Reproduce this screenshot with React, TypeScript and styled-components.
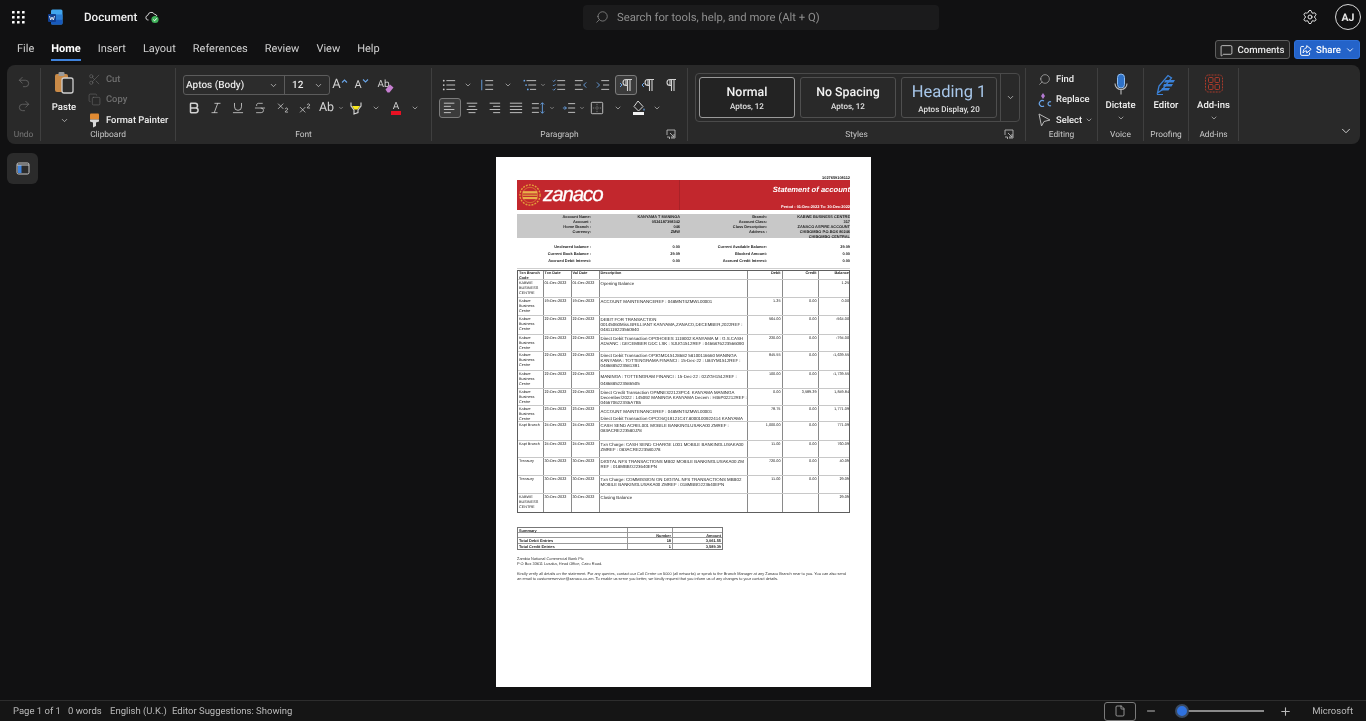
import { FC, ReactNode } from "react";
import styled, { createGlobalStyle } from "styled-components";
import {
  Bold, ChevronDown, Copy, File, Italic, MessageSquare, Minus, Plus, Redo2, Scissors, Search,
  Settings, Strikethrough, Subscript, Superscript, Underline, Undo2,
} from "lucide-react";

const GlobalStyle = createGlobalStyle`
  html, body { margin: 0; padding: 0; background: #111112; }
  #root { height: 721px; overflow: hidden; }
  * { box-sizing: border-box; }
`;

const Shell = styled.div`
  display: flex;
  flex-direction: column;
  width: 1366px;
  height: 721px;
  background: #111112;
  color: #e8e8e8;
  font-family: Roboto, "Noto Sans", sans-serif;
  text-rendering: geometricPrecision;
  filter: blur(0.25px);
`;

/* ---- title bar ---- */
const TitleBar = styled.div`
  display: flex;
  align-items: center;
  height: 33px;
  padding: 1px 5px 0 12px;
`;
const TitleLeft = styled.div`
  display: flex;
  align-items: center;
  width: 571px;
`;
const AppName = styled.span`
  margin-left: 21px;
  font-size: 11.6px;
  font-weight: 500;
  color: #f0f0f0;
`;
const SearchBox = styled.div`
  display: flex;
  align-items: center;
  gap: 8px;
  width: 356px;
  height: 25px;
  padding-left: 12px;
  border-radius: 4px;
  background: #1b1b1c;
  color: #8f8f8f;
  font-size: 11.3px;
`;
const TitleRight = styled.div`
  display: flex;
  align-items: center;
  gap: 17px;
  margin-left: auto;
`;
const Avatar = styled.div`
  display: flex;
  align-items: center;
  justify-content: center;
  width: 26px;
  height: 26px;
  border: 1px solid #d8d8d8;
  border-radius: 50%;
  font-size: 10.5px;
  font-weight: 700;
`;

/* ---- menu row ---- */
const MenuBar = styled.div`
  display: flex;
  align-items: flex-start;
  gap: 17px;
  height: 32px;
  padding: 7px 6px 0 17px;
`;
const MenuTab = styled.div<{ $active?: boolean }>`
  height: 21px;
  font-size: 11px;
  line-height: 18px;
  font-weight: ${(p) => (p.$active ? 700 : 400)};
  color: ${(p) => (p.$active ? "#ffffff" : "#d0d0d0")};
  border-bottom: 2px solid ${(p) => (p.$active ? "#3f83dd" : "transparent")};
`;
const MenuActions = styled.div`
  display: flex;
  gap: 4px;
  margin-left: auto;
`;
const CommentsButton = styled.div`
  display: flex;
  align-items: center;
  justify-content: center;
  gap: 4px;
  width: 75px;
  height: 19px;
  padding-top: 1px;
  border: 1px solid #5e5e5e;
  border-radius: 3px;
  background: #232323;
  font-size: 9.6px;
  font-weight: 500;
`;
const ShareButton = styled(CommentsButton)`
  width: 66px;
  background: #2463c9;
  border-color: #2e70d8;
  color: #fff;
`;

/* ---- ribbon ---- */
const Ribbon = styled.div`
  display: flex;
  height: 79px;
  margin: 0 6px 0 7px;
  border-radius: 8px;
  background: #292929;
`;
const Group = styled.div<{ $w: number; $plain?: boolean }>`
  display: flex;
  flex-direction: column;
  flex: none;
  width: ${(p) => p.$w}px;
  margin: 3px 0 3px;
  border-right: ${(p) => (p.$plain ? "none" : "1px solid #3f3f3f")};
`;
const GroupBody = styled.div`
  display: flex;
  flex: 1;
  min-height: 0;
`;
const GroupFoot = styled.div<{ $dim?: boolean }>`
  position: relative;
  flex: none;
  height: 20px;
  text-align: center;
  font-size: 8.4px;
  line-height: 28px;
  color: ${(p) => (p.$dim ? "#777" : "#c8c8c8")};
`;
const Launcher = styled.span<{ $right: number }>`
  position: absolute;
  right: ${(p) => p.$right}px;
  top: 8px;
  display: flex;
`;
const Stack = styled.div<{ $pad?: string; $gap?: number; $start?: boolean; $w?: string; $ml?: number }>`
  display: flex;
  flex: none;
  flex-direction: column;
  align-items: ${(p) => (p.$start ? "flex-start" : "center")};
  width: ${(p) => p.$w ?? "auto"};
  margin-left: ${(p) => p.$ml ?? 0}px;
  padding: ${(p) => p.$pad ?? "0"};
  gap: ${(p) => p.$gap ?? 0}px;
  & > * { flex: none; }
`;
const BigLabel = styled.div<{ $mt: number }>`
  margin-top: ${(p) => p.$mt}px;
  font-size: 9.5px;
  font-weight: 500;
  line-height: 14px;
  color: #f0f0f0;
`;
const CaretSlot = styled.span`
  display: flex;
  margin-top: 1px;
`;
const SmallRow = styled.div<{ $dim?: boolean }>`
  display: flex;
  align-items: center;
  height: 20.5px;
  gap: 3px;
  font-size: 9.4px;
  font-weight: 500;
  white-space: nowrap;
  color: ${(p) => (p.$dim ? "#6f6f6f" : "#eeeeee")};
`;
const SlimIcon = styled.span`
  display: flex;
  justify-content: center;
  flex: none;
  width: 16px;
  margin-right: 1px;
`;
const FontBox = styled.div`
  display: flex;
  align-items: center;
  width: 147px;
  height: 20px;
  border: 1px solid #5c5c5c;
  border-radius: 3px;
  background: #2c2c2c;
  font-size: 10px;
  font-weight: 500;
`;
const FontName = styled.div`
  display: flex;
  align-items: center;
  justify-content: space-between;
  width: 101px;
  height: 100%;
  padding: 0 6px 0 2px;
  border-right: 1px solid #5c5c5c;
`;
const FontSize = styled.div`
  display: flex;
  flex: 1;
  align-items: center;
  justify-content: space-between;
  padding: 0 6px 0 7px;
`;
const ToolRow = styled.div<{ $ml?: number; $mt?: number }>`
  display: flex;
  align-items: center;
  height: 22px;
  margin-left: ${(p) => p.$ml ?? 0}px;
  margin-top: ${(p) => p.$mt ?? 0}px;
`;
const Tool = styled.div<{ $w: number; $ml?: number; $boxed?: boolean }>`
  display: flex;
  align-items: center;
  justify-content: center;
  flex: none;
  width: ${(p) => p.$w}px;
  height: ${(p) => (p.$boxed ? 20 : 22)}px;
  margin-left: ${(p) => p.$ml ?? 0}px;
  color: #d2d2d2;
  border-radius: 3px;
  ${(p) => p.$boxed && "border: 1px solid #7c7c7c; background: #3b3b3b;"}
`;
const ToolLetter = styled.span<{ $size: number }>`
  font-size: ${(p) => p.$size}px;
  line-height: 16px;
`;
const StylePanel = styled.div`
  display: flex;
  align-items: stretch;
  flex: none;
  width: 325px;
  height: 49px;
  margin: 5px 0 0 7px;
  padding-left: 3px;
  border: 1px solid #4a4a4a;
  border-radius: 4px;
`;
const StyleCard = styled.div<{ $current?: boolean; $last?: boolean }>`
  display: flex;
  flex-direction: column;
  align-items: center;
  justify-content: center;
  width: 96px;
  height: 41px;
  margin: 3px ${(p) => (p.$last ? 3 : 5)}px 0 0;
  padding-top: 2px;
  border: 1px solid ${(p) => (p.$current ? "#9a9a9a" : "#4f4f4f")};
  border-radius: 3px;
  background: ${(p) => (p.$current ? "#232323" : "#292929")};
`;
const StyleTitle = styled.div<{ $heading?: boolean }>`
  font-size: ${(p) => (p.$heading ? 16.5 : 12.4)}px;
  line-height: ${(p) => (p.$heading ? 22 : 17)}px;
  font-weight: ${(p) => (p.$heading ? 400 : 500)};
  color: ${(p) => (p.$heading ? "#a8c7ea" : "#f2f2f2")};
`;
const StyleSub = styled.div`
  font-size: 8px;
  line-height: 12px;
  font-weight: 500;
  color: #e0e0e0;
`;
const StyleMore = styled.div`
  display: flex;
  align-items: center;
  justify-content: center;
  flex: 1;
  border-left: 1px solid #4a4a4a;
  color: #d0d0d0;
`;
const CollapseSlot = styled.div`
  display: flex;
  align-items: flex-end;
  justify-content: flex-end;
  flex: 1;
  padding: 0 7px 6px 0;
  color: #d8d8d8;
`;

/* ---- canvas and page ---- */
const Canvas = styled.div`
  display: grid;
  grid-template-columns: 496px 375px 1fr;
  flex: 1;
  min-height: 0;
  padding-top: 9px;
`;
const PaneButton = styled.div`
  display: flex;
  align-items: center;
  justify-content: center;
  width: 31px;
  height: 31px;
  margin-left: 7px;
  border-radius: 6px;
  background: #2b2b2b;
`;
const Page = styled.div`
  height: 530px;
  margin-top: 4px;
  padding: 19px 21px 0;
  background: #fff;
  color: #222;
  font-family: "Liberation Sans", Arial, sans-serif;
  overflow: hidden;
  filter: blur(0.3px);
`;
const RefNumber = styled.div`
  height: 4px;
  text-align: right;
  font-size: 3.9px;
  line-height: 4px;
  font-weight: 700;
`;
const Banner = styled.div`
  display: grid;
  grid-template-columns: 163px 1fr;
  height: 29.5px;
  background: #c2272d;
  color: #fff;
  overflow: hidden;
`;
const BannerLeft = styled.div`
  display: flex;
  align-items: center;
  gap: 1px;
  padding-left: 1px;
  border-right: 1px solid #a92228;
`;
const BrandName = styled.span`
  font-size: 20.5px;
  line-height: 22px;
  font-style: italic;
  letter-spacing: -1.1px;
  -webkit-text-stroke: 0.3px #fff;
`;
const BannerRight = styled.div`
  display: flex;
  flex-direction: column;
  align-items: flex-end;
  padding-top: 5px;
  white-space: nowrap;
`;
const StatementTitle = styled.div`
  font-size: 7.6px;
  line-height: 9px;
  font-weight: 700;
  font-style: italic;
`;
const PeriodText = styled.div`
  margin-top: 10px;
  font-size: 3.9px;
  line-height: 5px;
  font-weight: 700;
`;
const InfoGrid = styled.div<{ $grey?: boolean; $row: number }>`
  display: grid;
  grid-template-columns: 74px 89px 87px 83px;
  grid-auto-rows: ${(p) => p.$row}px;
  margin-top: ${(p) => (p.$grey ? 4.5 : 6)}px;
  height: ${(p) => (p.$grey ? "24px" : "auto")};
  background: ${(p) => (p.$grey ? "#c8c8c8" : "transparent")};
  font-size: 3.9px;
  font-weight: 700;
  text-align: right;
  line-height: 5px;
`;
const InfoCell = styled.div`
  white-space: pre-line;
`;
const Rule = styled.div`
  height: 1px;
  margin-top: 3px;
  background: #cfcfcf;
`;
const StatementTable = styled.div`
  width: 333px;
  margin-top: 1px;
  border: 1px solid #5e5e5e;
`;
const Row = styled.div<{ $h: number }>`
  display: grid;
  grid-template-columns: 25.5px 28px 28px 148px 35px 36px 31.5px;
  height: ${(p) => p.$h}px;
  border-bottom: 1px solid #c8c8c8;
  &:last-child { border-bottom: none; }
`;
const Cell = styled.div<{ $num?: boolean; $desc?: boolean; $loose?: boolean; $head?: boolean }>`
  padding: ${(p) => (p.$loose ? "1.5px" : p.$head ? "0" : "0.5px")} 1px 0 1px;
  border-right: 1px solid #8a8a8a;
  overflow: hidden;
  white-space: pre;
  text-align: ${(p) => (p.$num ? "right" : "left")};
  font-weight: ${(p) => (p.$head ? 700 : 400)};
  font-size: ${(p) => (p.$desc ? 4.4 : 3.8)}px;
  line-height: ${(p) => (p.$loose ? 7 : 5)}px;
  &:last-child { border-right: none; }
`;
const SummaryTable = styled.div`
  width: 206px;
  margin-top: 14px;
  border: 1px solid #777;
  font-size: 3.9px;
  line-height: 5px;
`;
const SumRow = styled.div`
  display: grid;
  grid-template-columns: 110px 45px 49px;
  height: 5.2px;
  border-bottom: 0.6px solid #999;
  &:last-child { border-bottom: none; }
`;
const SumCell = styled.div<{ $num?: boolean; $bold?: boolean }>`
  padding: 0 1px;
  border-right: 0.6px solid #999;
  text-align: ${(p) => (p.$num ? "right" : "left")};
  font-weight: ${(p) => (p.$bold ? 700 : 400)};
  &:last-child { border-right: none; }
`;
const Notes = styled.div`
  margin-top: 6.5px;
  font-size: 3.9px;
  line-height: 5px;
  color: #333;
`;
const NoteBlock = styled.p`
  margin: 0 0 4.7px;
`;

/* ---- status bar ---- */
const StatusBar = styled.div`
  display: flex;
  align-items: center;
  height: 21px;
  padding: 0 13px;
  border-top: 1px solid #2d2d2d;
  background: #151515;
  font-size: 9.5px;
  color: #b9b9b9;
`;
const StatusItem = styled.span<{ $w: number }>`
  flex: none;
  width: ${(p) => p.$w}px;
  white-space: nowrap;
`;
const ViewButton = styled.div`
  display: flex;
  align-items: center;
  justify-content: center;
  width: 32px;
  height: 19px;
  margin-left: auto;
  border: 1px solid #7a7a7a;
  border-radius: 3px;
`;
const ZoomTrack = styled.div`
  position: relative;
  width: 88px;
  height: 2px;
  margin: 0 15px 0 19px;
  background: #8a8a8a;
`;
const ZoomThumb = styled.span`
  position: absolute;
  left: -1px;
  top: -6px;
  width: 14px;
  height: 14px;
  border: 2px solid #3a4a60;
  border-radius: 50%;
  background: #2f72e0;
`;
const BrandText = styled.span`
  margin-left: 20px;
`;

/* ---- drawn icons ---- */
const G: FC<{ s?: number; children: ReactNode }> = ({ s = 16, children }) => (
  <svg width={s} height={s} viewBox="0 0 16 16" fill="none" stroke="currentColor" strokeWidth="1">
    {children}
  </svg>
);
const Caret: FC<{ size?: number }> = ({ size = 9 }) => <ChevronDown size={size} strokeWidth={2} color="#c8c8c8" />;

const Waffle = () => (
  <svg width="13" height="13" viewBox="0 0 13 13" fill="#fff">
    {[0, 5, 10].flatMap((y) => [0, 5, 10].map((x) => <rect key={`${x}${y}`} x={x} y={y} width="2.6" height="2.6" rx=".5" />))}
  </svg>
);
const WordIcon = () => (
  <svg width="15" height="17" viewBox="0 0 15 17">
    <rect x="3" y="0.5" width="11.5" height="15" rx="1.5" fill="#41a5ee" />
    <rect x="3" y="5.5" width="11.5" height="5" fill="#2b7cd3" />
    <rect x="3" y="10.5" width="11.5" height="5" rx="1" fill="#185abd" />
    <rect x="0" y="5" width="8" height="8" rx="1" fill="#103f91" />
    <path d="M1.5 7 L2.7 11 L4 8 L5.3 11 L6.5 7" fill="none" stroke="#fff" strokeWidth=".8" />
  </svg>
);
const CloudOk = () => (
  <svg width="15" height="14" viewBox="0 0 15 14" style={{ marginLeft: 8 }}>
    <path d="M3.5 10 H2.8 A2.4 2.4 0 0 1 2.8 5.3 A3.6 3.6 0 0 1 9.6 4.4 A2.5 2.5 0 0 1 12 6" fill="none" stroke="#d8d8d8" />
    <circle cx="10" cy="9.5" r="3.6" fill="#3fb25a" />
    <path d="M8.3 9.6 L9.6 10.8 L11.8 8.3" fill="none" stroke="#fff" />
  </svg>
);
const ShareIcon = () => (
  <svg width="13" height="13" viewBox="0 0 16 16" fill="none" stroke="#fff" strokeWidth="1.2">
    <path d="M6 3 H3.5 A1.5 1.5 0 0 0 2 4.5 V12.5 A1.5 1.5 0 0 0 3.5 14 H11.5 A1.5 1.5 0 0 0 13 12.5 V10.5" />
    <path d="M9.5 2 L15 6.5 L9.5 11 V8.5 C7 8.5 6 9.5 5 11 C5 8 6.5 4.8 9.5 4.6 Z" />
  </svg>
);
const PasteIcon = () => (
  <svg width="21" height="24" viewBox="0 0 21 24">
    <rect x="1" y="3" width="13" height="18" rx="2" fill="#c98a47" />
    <rect x="4.5" y="1" width="6" height="4" rx="1" fill="#9a9a9a" />
    <rect x="8" y="7" width="11" height="15" rx="2" fill="#2c2c2c" stroke="#cfcfcf" strokeWidth="1.3" />
  </svg>
);
const BrushIcon = () => (
  <svg width="13" height="15" viewBox="0 0 13 15">
    <rect x="2" y="0.5" width="9" height="6" rx="1" fill="#e08a32" />
    <path d="M2 6.5 H11 V8.5 L8 9.5 V13 L5 14.5 V9.5 L2 8.5 Z" fill="#d9d9d9" />
  </svg>
);
const Tick: FC<{ up?: boolean }> = ({ up }) => (
  <svg width="7" height="6" viewBox="0 0 7 6" fill="none" style={{ alignSelf: "flex-start", marginTop: 4 }}>
    <path d={up ? "M1 4.5 L3.5 2 L6 4.5" : "M1 1.5 L3.5 4 L6 1.5"} stroke="#6aa5e8" strokeWidth="1.1" />
  </svg>
);
const EraserMark = () => (
  <svg width="9" height="9" viewBox="0 0 9 9" style={{ marginLeft: -5, marginTop: 6 }}>
    <path d="M0.5 5.5 L5 0.5 L8.5 3.5 L4.5 8.5 H2.5 Z" fill="#c77fd1" />
  </svg>
);
const Highlight = () => (
  <svg width="14" height="15" viewBox="0 0 14 15" fill="none">
    <path d="M2 1.5 V5 L5 9 V13 L9 11.5 V9 L12 5 V1.5" stroke="#d8d8d8" strokeWidth="1.1" />
    <path d="M3 5 H11 L8.5 8.5 H5.5 Z" fill="#f8e71c" />
  </svg>
);
const ColorBar = styled.span`
  display: block;
  width: 10px;
  height: 3.5px;
  margin-top: -1px;
  background: #e81123;
`;
const ColorLetter = styled.span`
  display: flex;
  flex-direction: column;
  align-items: center;
  font-size: 10px;
  line-height: 11px;
`;
const Bullets = () => (
  <G s={14}>
    <path d="M5 3 H15 M5 8 H15 M5 13 H15" />
    {[3, 8, 13].map((y) => <circle key={y} cx="2" cy={y} r="1" fill="#cfcfcf" stroke="none" />)}
  </G>
);
const Numbered = () => (
  <G s={14}>
    <path d="M2 2 V14" stroke="#6aa5e8" />
    <path d="M6 3 H15 M6 8 H15 M6 13 H15" />
  </G>
);
const Multi = () => (
  <G s={14}>
    <path d="M4 3 H15 M6 8 H15 M8 13 H15" />
    <circle cx="1.5" cy="3" r="1" fill="#6aa5e8" stroke="none" />
    <circle cx="3.5" cy="8" r="1" fill="#6aa5e8" stroke="none" />
    <circle cx="5.5" cy="13" r="1" fill="#6aa5e8" stroke="none" />
  </G>
);
const Checklist = () => (
  <G s={14}>
    <path d="M6 3 H15 M6 8 H15 M6 13 H15" />
    <path d="M1 3 L2 4 L4 2 M1 8 L2 9 L4 7 M1 13 L2 14 L4 12" stroke="#6aa5e8" />
  </G>
);
const Outdent = () => (
  <G s={14}>
    <path d="M1 3 H10 M1 8 H8 M1 13 H10" />
    <path d="M14 5 L11 8 L14 11" stroke="#6aa5e8" />
  </G>
);
const Indent = () => (
  <G s={14}>
    <path d="M6 3 H15 M8 8 H15 M6 13 H15" />
    <path d="M1 5 L4 8 L1 11" stroke="#6aa5e8" />
  </G>
);
const Pilcrow: FC<{ mark?: "ltr" | "rtl" }> = ({ mark }) => (
  <svg width="15" height="14" viewBox="0 0 15 14" fill="none">
    {mark === "ltr" && <path d="M1 5 L3 7 L1 9" stroke="#6aa5e8" />}
    {mark === "rtl" && <path d="M3 5 L1 7 L3 9" stroke="#6aa5e8" />}
    <path d="M7 7.5 A3 3 0 0 1 7 1.5 H13 M8.5 1.5 V13 M11 1.5 V13 M7 1.5 V7.5 H8.5" stroke="#d2d2d2" strokeWidth="1.1" fill="none" />
  </svg>
);
const Align: FC<{ kind: "left" | "center" | "right" | "justify" }> = ({ kind }) => {
  const s = (w: number) => (kind === "left" || kind === "justify" ? 1 : kind === "center" ? 8 - w / 2 : 15 - w);
  const ws = kind === "justify" ? [14, 14, 14, 14] : [12, 8, 12, 8];
  return (
    <G s={14}>
      {ws.map((w, i) => <path key={i} d={`M${s(w)} ${2.5 + i * 3.6} h${w}`} />)}
    </G>
  );
};
const LineSpacing = () => (
  <G s={14}>
    <path d="M1 3 H9 M1 8 H9 M1 13 H9" />
    <path d="M13 2 V14 M11 4 L13 2 L15 4 M11 12 L13 14 L15 12" stroke="#6aa5e8" />
  </G>
);
const IndentMark = () => (
  <G s={14}>
    <path d="M7 3 H15 M7 8 H15 M7 13 H15" />
    <path d="M1 8 H5 M3 6 L5 8 L3 10" stroke="#6aa5e8" />
  </G>
);
const Borders = () => (
  <G s={14}>
    <rect x="1.5" y="1.5" width="13" height="13" rx="1" stroke="#cfcfcf" />
    <path d="M8 1.5 V14.5 M1.5 8 H14.5" stroke="#8a8a8a" strokeDasharray="1 1" />
  </G>
);
const Shading = () => (
  <svg width="15" height="16" viewBox="0 0 15 16" fill="none">
    <path d="M7 1 L12 6.5 L7.5 11 L3 6.5 Z" stroke="#d8d8d8" />
    <path d="M13 8 Q14.5 10 13 11 Q11.5 10 13 8" fill="#6aa5e8" />
    <rect x="2" y="12" width="11" height="3" fill="#f2f2f2" />
  </svg>
);
const LauncherIcon = () => (
  <svg width="10" height="10" viewBox="0 0 10 10" fill="none" stroke="#b8b8b8" strokeWidth=".9">
    <path d="M1 6 V1 H9 V9 H5" />
    <path d="M1 8 H3.5 V10 M4 4 L8 8 M8 5 V8 H5" />
  </svg>
);
const ReplaceIcon = () => (
  <svg width="15" height="15" viewBox="0 0 15 15" fill="none">
    <path d="M6 1 L8 4 L6 7 L4 4 Z" fill="#b37ad1" />
    <path d="M7 9 A3 3 0 1 0 7 14" stroke="#6aa5e8" strokeWidth="1.2" />
    <path d="M14 10 A2 2 0 1 0 14 13.5" stroke="#6aa5e8" strokeWidth="1.2" />
  </svg>
);
const SelectIcon = () => (
  <svg width="14" height="14" viewBox="0 0 14 14" fill="none" stroke="#b8b8b8">
    <path d="M2 1 L13 7 L7 8.5 L4.5 13 Z" />
  </svg>
);
const MicIcon = () => (
  <svg width="16" height="23" viewBox="0 0 16 23" fill="none">
    <rect x="4.5" y="1" width="7" height="14" rx="3.5" fill="#2f72c8" stroke="#8fbdf0" />
    <path d="M2 10.5 A6 6 0 0 0 14 10.5 M8 17 V21.5" stroke="#bdbdbd" strokeWidth="1.1" />
  </svg>
);
const EditorIcon = () => (
  <svg width="20" height="23" viewBox="0 0 20 23" fill="none">
    <path d="M1.5 20 L3 13 L12 2.5 L15.5 5 L6.5 16.5 Z" stroke="#3b82d8" strokeWidth="1.3" />
    <path d="M8 11 H17 L15.5 13.5 H7 Z M9.5 7 H19 L17.5 9.5 H8 Z M6 15 H14 L12.5 17.5 H5 Z" fill="#3b82d8" />
    <path d="M1 21.5 H7" stroke="#3b82d8" />
  </svg>
);
const AddinsIcon = () => (
  <svg width="18" height="19" viewBox="0 0 18 19" fill="none" stroke="#a83a2b" strokeWidth="1">
    <rect x="0.5" y="1" width="17" height="17" rx="3" strokeDasharray="2 1" />
    <rect x="3.5" y="3.5" width="4.5" height="5" rx="1" />
    <rect x="10" y="3.5" width="4.5" height="5" rx="1" />
    <rect x="3.5" y="10.5" width="4.5" height="5" rx="1" />
    <rect x="10" y="10.5" width="4.5" height="5" rx="1" />
  </svg>
);
const PaneIcon = () => (
  <svg width="14" height="13" viewBox="0 0 14 13">
    <rect x="1" y="1" width="12" height="11" rx="1.5" fill="none" stroke="#c9c9c9" />
    <rect x="2" y="3" width="3.5" height="8" fill="#3f83dd" />
    <path d="M1 3 H13" stroke="#c9c9c9" />
  </svg>
);
const ZanacoGear = () => (
  <svg width="24" height="24" viewBox="0 0 25 25">
    <circle cx="12.5" cy="12.5" r="10.5" fill="#c2272d" stroke="#e5a13a" strokeWidth="1.4" strokeDasharray="2 1.2" />
    <circle cx="12.5" cy="12.5" r="8" fill="none" stroke="#e5a13a" strokeWidth=".6" />
    <rect x="5" y="8.5" width="15" height="2.4" fill="#e9b04a" />
    <rect x="5" y="12" width="15" height="1.6" fill="#d98f3a" />
    <rect x="5" y="14.6" width="15" height="2.2" fill="#e9b04a" />
  </svg>
);

/* ---- data ---- */
const accountRows = [
  ["Account Name:", "KANYAMA T MANINGA", "Branch:", "KABWE BUSINESS CENTRE"],
  ["Account :", "0524187398342", "Account Class:", "317"],
  ["Home Branch :", "046", "Class Description:", "ZANACO ASPIRE ACCOUNT"],
  ["Currency:", "ZMW", "Address :", "CHIBOMBO  P.O.BOX 80246\nCHIBOMBO CENTRAL"],
];
const balanceRows = [
  ["Uncleared balance :", "0.00", "Current Available Balance:", "29.09"],
  ["Current Book Balance :", "29.09", "Blocked Amount:", "0.00"],
  ["Accrued Debit Interest:", "0.00", "Accrued Credit Interest:", "0.00"],
];
const KB = "Kabwe\nBusiness\nCentre";
const KC = "KABWE\nBUSINESS\nCENTRE";
const txns = [
  [18, KC, "01-Dec-2022", "Opening Balance", "", "", "1.25"],
  [18, KB, "19-Dec-2022", "ACCOUNT MAINTENANCEREF : 048MNT4ZMWL00001", "1.25", "0.00", "0.00"],
  [19, KB, "22-Dec-2022", "DEBIT FOR TRANSACTION\n00145060Miss.BRILLIANT KANYAMA,ZANACO,DECEMBER,2022REF :\n0481119223560940", "564.00", "0.00", "-564.00"],
  [17, KB, "22-Dec-2022", "Direct Debit Transaction OPGHOEES 1119002 KANYAMA M : G.S.CASH\nADVANC : DECEMBER DDC LSK : SJUG1512REF : 0466876223566090", "230.00", "0.00", "-794.00"],
  [19, KB, "22-Dec-2022", "Direct Debit Transaction OP3GMD15128682 58100116660 MANINGA\nKANYAMA : TOTTENGRAMA FINANCI : 15-Dec-22 : U84YM1512REF :\n0486885223581391", "845.55", "0.00", "-1,639.55"],
  [18, KB, "22-Dec-2022", "MANINGA : TOTTENGRAM FINANCI : 15-Dec-22 : 02ZGH1512REF :\n0486885223586505", "100.00", "0.00", "-1,739.55"],
  [17, KB, "22-Dec-2022", "Direct Credit Transaction OPMNE322123PC4: KANYAMA MANINGA\nDecember/2022 : 145092 MANINGA KANYAMA Decem : H46P02212REF :\n0466706223S6A7B5", "0.00", "3,589.39", "1,849.84"],
  [16, KB, "23-Dec-2022", "ACCOUNT MAINTENANCEREF : 048MNT4ZMWL00001\nDirect Debit Transaction OPCO6Q19121C47.8000100922414 KANYAMA", "78.75", "0.00", "1,771.09"],
  [19, "Kapt Branch", "24-Dec-2022", "CASH SEND ACREL001 MOBILE BANKINGLUSAKA00 ZMREF :\n083ACRE223580J78", "1,000.00", "0.00", "771.09"],
  [17, "Kapt Branch", "24-Dec-2022", "Txn Charge: CASH SEND CHARGE L001 MOBILE BANKINGLUSAKA00\nZMREF : 083ACRE223580J78", "11.00", "0.00", "760.09"],
  [18, "Treasury", "30-Dec-2022", "DIGITAL NFS TRANSACTIONS MB02 MOBILE BANKINGLUSAKA00 ZM\nREF : 018MBBO223640EPN", "720.00", "0.00", "40.09"],
  [18, "Treasury", "30-Dec-2022", "Txn Charge: COMMISSION ON DIGITAL NFS TRANSACTIONS MBB02\nMOBILE BANKINGLUSAKA00 ZMREF : 018MBBO223640EPN", "11.00", "0.00", "29.09"],
  [18, KC, "30-Dec-2022", "Closing Balance", "", "", "29.09"],
] as const;
const menuTabs = ["File", "Home", "Insert", "Layout", "References", "Review", "View", "Help"];

export default function App() {
  return (
    <Shell>
      <GlobalStyle />
      <TitleBar>
        <TitleLeft>
          <Waffle />
          <span style={{ display: "flex", marginLeft: 23 }}><WordIcon /></span>
          <AppName>Document</AppName>
          <CloudOk />
        </TitleLeft>
        <SearchBox>
          <Search size={14} strokeWidth={1.3} style={{ transform: "scaleX(-1)" }} />
          Search for tools, help, and more (Alt + Q)
        </SearchBox>
        <TitleRight>
          <Settings size={16} strokeWidth={1.5} />
          <Avatar>AJ</Avatar>
        </TitleRight>
      </TitleBar>

      <MenuBar>
        {menuTabs.map((t) => (
          <MenuTab key={t} $active={t === "Home"}>{t}</MenuTab>
        ))}
        <MenuActions>
          <CommentsButton>
            <MessageSquare size={13} strokeWidth={1.4} />
            Comments
          </CommentsButton>
          <ShareButton>
            <ShareIcon />
            Share
            <ChevronDown size={10} />
          </ShareButton>
        </MenuActions>
      </MenuBar>

      <Ribbon>
        <Group $w={34}>
          <GroupBody>
            <Stack $pad="7px 0 0 1px" $gap={10} $w="100%" style={{ color: "#6d6d6d" }}>
              <Undo2 size={14} strokeWidth={1.3} />
              <Redo2 size={14} strokeWidth={1.3} />
            </Stack>
          </GroupBody>
          <GroupFoot $dim>Undo</GroupFoot>
        </Group>

        <Group $w={135}>
          <GroupBody>
            <Stack $pad="3px 0 0 0" $w="46px">
              <PasteIcon />
              <BigLabel $mt={6}>Paste</BigLabel>
              <CaretSlot><Caret /></CaretSlot>
            </Stack>
            <Stack $start $ml={-1} $pad="1px 0 0">
              <SmallRow $dim><SlimIcon><Scissors size={13} strokeWidth={1} /></SlimIcon>Cut</SmallRow>
              <SmallRow $dim><SlimIcon><Copy size={13} strokeWidth={1} /></SlimIcon>Copy</SmallRow>
              <SmallRow><SlimIcon><BrushIcon /></SlimIcon>Format Painter</SmallRow>
            </Stack>
          </GroupBody>
          <GroupFoot>Clipboard</GroupFoot>
        </Group>

        <Group $w={256}>
          <GroupBody>
            <Stack $start $pad="6px 0 0 7px">
              <ToolRow>
                <FontBox>
                  <FontName>Aptos (Body)<Caret /></FontName>
                  <FontSize>12<Caret /></FontSize>
                </FontBox>
                <Tool $w={20}><ToolLetter $size={13}>A</ToolLetter><Tick up /></Tool>
                <Tool $w={23}><ToolLetter $size={11}>A</ToolLetter><Tick /></Tool>
                <Tool $w={25}><ToolLetter $size={10}>Ab</ToolLetter><EraserMark /></Tool>
              </ToolRow>
              <ToolRow $mt={1}>
                <Tool $w={22}><Bold size={14} strokeWidth={2.6} /></Tool>
                <Tool $w={22}><Italic size={14} strokeWidth={1.4} /></Tool>
                <Tool $w={22}><Underline size={14} strokeWidth={1.4} /></Tool>
                <Tool $w={22}><Strikethrough size={14} strokeWidth={1.3} /></Tool>
                <Tool $w={23}><Subscript size={14} strokeWidth={1.3} /></Tool>
                <Tool $w={21}><Superscript size={14} strokeWidth={1.3} /></Tool>
                <Tool $w={23}><ToolLetter $size={12.5}>Ab</ToolLetter></Tool>
                <Tool $w={6}><Caret size={8} /></Tool>
                <Tool $w={24}><Highlight /></Tool>
                <Tool $w={16}><Caret size={8} /></Tool>
                <Tool $w={24}><ColorLetter>A<ColorBar /></ColorLetter></Tool>
                <Tool $w={14}><Caret size={8} /></Tool>
              </ToolRow>
            </Stack>
          </GroupBody>
          <GroupFoot>Font</GroupFoot>
        </Group>

        <Group $w={256}>
          <GroupBody>
            <Stack $start $pad="6px 0 0 7px">
              <ToolRow>
                <Tool $w={20}><Bullets /></Tool>
                <Tool $w={18}><Caret size={8} /></Tool>
                <Tool $w={20}><Numbered /></Tool>
                <Tool $w={22}><Caret size={8} /></Tool>
                <Tool $w={21}><Multi /></Tool>
                <Tool $w={6}><Caret size={8} /></Tool>
                <Tool $w={26}><Checklist /></Tool>
                <Tool $w={18}><Outdent /></Tool>
                <Tool $w={25}><Indent /></Tool>
                <Tool $w={22} $boxed><Pilcrow mark="ltr" /></Tool>
                <Tool $w={22}><Pilcrow mark="rtl" /></Tool>
                <Tool $w={22}><Pilcrow /></Tool>
              </ToolRow>
              <ToolRow $mt={1}>
                <Tool $w={22} $boxed><Align kind="left" /></Tool>
                <Tool $w={22}><Align kind="center" /></Tool>
                <Tool $w={22}><Align kind="right" /></Tool>
                <Tool $w={22}><Align kind="justify" /></Tool>
                <Tool $w={22}><LineSpacing /></Tool>
                <Tool $w={6}><Caret size={8} /></Tool>
                <Tool $w={20} $ml={4}><IndentMark /></Tool>
                <Tool $w={6}><Caret size={8} /></Tool>
                <Tool $w={24}><Borders /></Tool>
                <Tool $w={17}><Caret size={8} /></Tool>
                <Tool $w={24}><Shading /></Tool>
                <Tool $w={14}><Caret size={8} /></Tool>
              </ToolRow>
            </Stack>
          </GroupBody>
          <GroupFoot>
            Paragraph
            <Launcher $right={11}><LauncherIcon /></Launcher>
          </GroupFoot>
        </Group>

        <Group $w={338}>
          <GroupBody>
            <StylePanel>
              <StyleCard $current><StyleTitle>Normal</StyleTitle><StyleSub>Aptos, 12</StyleSub></StyleCard>
              <StyleCard><StyleTitle>No Spacing</StyleTitle><StyleSub>Aptos, 12</StyleSub></StyleCard>
              <StyleCard $last><StyleTitle $heading>Heading 1</StyleTitle><StyleSub>Aptos Display, 20</StyleSub></StyleCard>
              <StyleMore><Caret /></StyleMore>
            </StylePanel>
          </GroupBody>
          <GroupFoot>
            Styles
            <Launcher $right={11}><LauncherIcon /></Launcher>
          </GroupFoot>
        </Group>

        <Group $w={72}>
          <GroupBody>
            <Stack $start $pad="1px 0 0 10px">
              <SmallRow><SlimIcon><Search size={13} strokeWidth={1.2} color="#c0c0c0" style={{ transform: "scaleX(-1)" }} /></SlimIcon>Find</SmallRow>
              <SmallRow><SlimIcon><ReplaceIcon /></SlimIcon>Replace</SmallRow>
              <SmallRow><SlimIcon><SelectIcon /></SlimIcon>Select<Caret size={8} /></SmallRow>
            </Stack>
          </GroupBody>
          <GroupFoot>Editing</GroupFoot>
        </Group>

        <Group $w={46}>
          <GroupBody>
            <Stack $pad="5px 0 0" $w="100%">
              <MicIcon />
              <BigLabel $mt={3}>Dictate</BigLabel>
              <CaretSlot><Caret size={8} /></CaretSlot>
            </Stack>
          </GroupBody>
          <GroupFoot>Voice</GroupFoot>
        </Group>

        <Group $w={45}>
          <GroupBody>
            <Stack $pad="5px 0 0" $w="100%">
              <EditorIcon />
              <BigLabel $mt={3}>Editor</BigLabel>
            </Stack>
          </GroupBody>
          <GroupFoot>Proofing</GroupFoot>
        </Group>

        <Group $w={50}>
          <GroupBody>
            <Stack $pad="6px 0 0" $w="100%">
              <AddinsIcon />
              <BigLabel $mt={6}>Add-ins</BigLabel>
              <CaretSlot><Caret size={8} /></CaretSlot>
            </Stack>
          </GroupBody>
          <GroupFoot>Add-ins</GroupFoot>
        </Group>

        <CollapseSlot><ChevronDown size={14} strokeWidth={1.6} /></CollapseSlot>
      </Ribbon>

      <Canvas>
        <PaneButton><PaneIcon /></PaneButton>
        <Page>
          <RefNumber>1027659108112</RefNumber>
          <Banner>
            <BannerLeft>
              <ZanacoGear />
              <BrandName>zanaco</BrandName>
            </BannerLeft>
            <BannerRight>
              <StatementTitle>Statement of account</StatementTitle>
              <PeriodText>Period : 01-Dec-2022 To: 30-Dec-2022</PeriodText>
            </BannerRight>
          </Banner>

          <InfoGrid $grey $row={5}>
            {accountRows.flat().map((v, i) => <InfoCell key={i}>{v}</InfoCell>)}
          </InfoGrid>
          <InfoGrid $row={7}>
            {balanceRows.flat().map((v, i) => <InfoCell key={i}>{v}</InfoCell>)}
          </InfoGrid>
          <Rule />

          <StatementTable>
            <Row $h={9}>
              <Cell $head>{"Txn Branch\nCode"}</Cell>
              <Cell $head>Txn Date</Cell>
              <Cell $head>Val Date</Cell>
              <Cell $head>Description</Cell>
              <Cell $head $num>Debit</Cell>
              <Cell $head $num>Credit</Cell>
              <Cell $head $num>Balance</Cell>
            </Row>
            {txns.map(([h, branch, date, desc, debit, credit, balance], i) => (
              <Row key={i} $h={h}>
                <Cell>{branch}</Cell>
                <Cell>{date}</Cell>
                <Cell>{date}</Cell>
                <Cell $desc $loose={i === 5 || i === 7}>{desc}</Cell>
                <Cell $num>{debit}</Cell>
                <Cell $num>{credit}</Cell>
                <Cell $num>{balance}</Cell>
              </Row>
            ))}
          </StatementTable>

          <SummaryTable>
            <SumRow><SumCell $bold>Summary</SumCell><SumCell /><SumCell /></SumRow>
            <SumRow><SumCell /><SumCell $num $bold>Number</SumCell><SumCell $num $bold>Amount</SumCell></SumRow>
            <SumRow><SumCell $bold>Total Debit Entries</SumCell><SumCell $num $bold>18</SumCell><SumCell $num $bold>3,061.55</SumCell></SumRow>
            <SumRow><SumCell $bold>Total Credit Entries</SumCell><SumCell $num $bold>1</SumCell><SumCell $num $bold>3,589.39</SumCell></SumRow>
          </SummaryTable>

          <Notes>
            <NoteBlock>
              Zambia National Commercial Bank Plc
              <br />
              P O Box 33611 Lusaka, Head Office, Cairo Road.
            </NoteBlock>
            <NoteBlock>
              Kindly verify all details on the statement. For any queries, contact our Call Centre on 5000 (all networks) or speak to the Branch Manager at any Zanaco Branch near to you. You can also send an email to customerservice@zanaco.co.zm. To enable us serve you better, we kindly request that you inform us of any changes to your contact details.
            </NoteBlock>
          </Notes>
        </Page>
      </Canvas>

      <StatusBar>
        <StatusItem $w={55}>Page 1 of 1</StatusItem>
        <StatusItem $w={42}>0 words</StatusItem>
        <StatusItem $w={62}>English (U.K.)</StatusItem>
        <StatusItem $w={130}>Editor Suggestions: Showing</StatusItem>
        <ViewButton><File size={12} strokeWidth={1.5} /></ViewButton>
        <Minus size={12} style={{ marginLeft: 9 }} />
        <ZoomTrack><ZoomThumb /></ZoomTrack>
        <Plus size={13} />
        <BrandText>Microsoft</BrandText>
      </StatusBar>
    </Shell>
  );
}
